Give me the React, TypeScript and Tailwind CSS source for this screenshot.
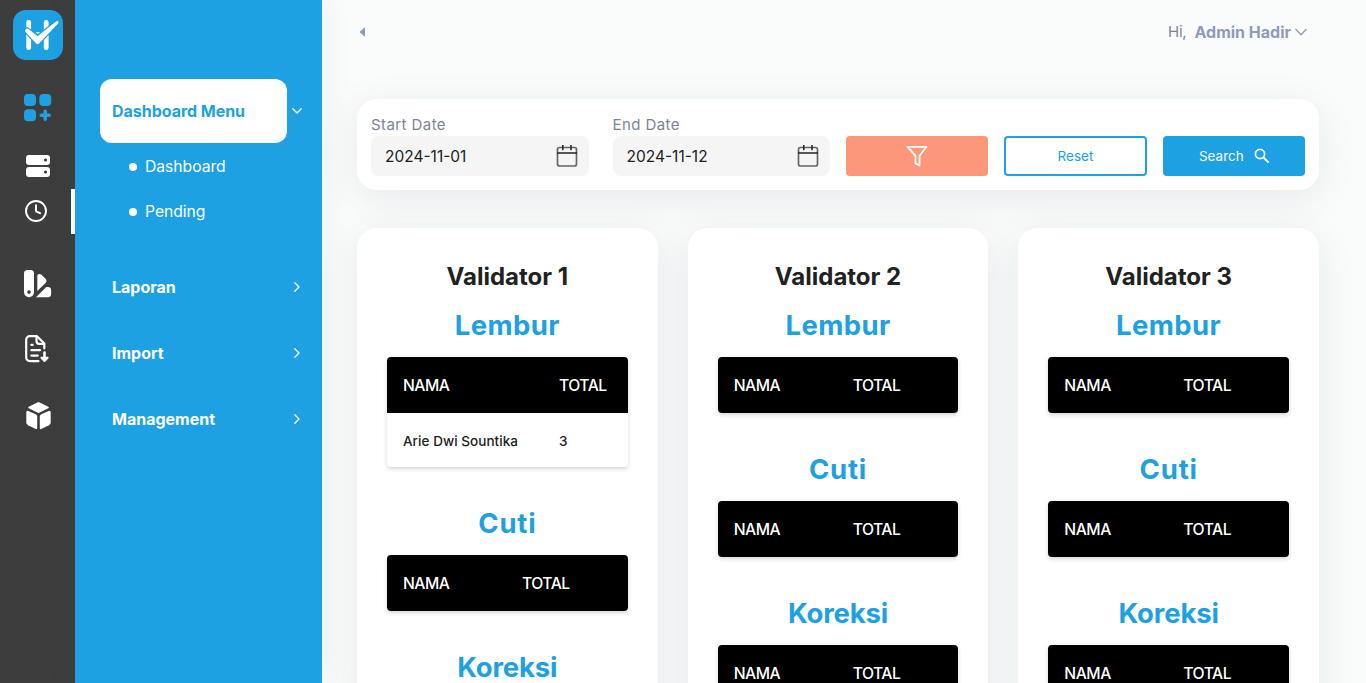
import React from "react";

const CARD_SHADOW = "shadow-[0_8px_36px_2px_rgba(60,70,100,0.09)]";

function Logo() {
  return (
    <svg viewBox="0 0 50 50" className="h-[50px] w-[50px]" aria-hidden="true">
      <rect width="50" height="50" rx="13" fill="#1da1e3" />
      <path d="M15.700 12.300v25.400M33.200 12.300v25.400" fill="none" stroke="#fff" strokeWidth="4.800" strokeLinecap="round" />
      <path d="M22.300 22.300h5l-2.500 1.700z" fill="#fff" />
      <path
        d="M12.200 20.300q.8-2.500 3.100-1.500L24.600 26.300 43.300 11.200q1.800-.8 2.300.8 0 .9-.7 1.700L26 33.500q-1.400 1.400-2.800 0L12.800 22.500q-.9-1-.6-2.200z"
        fill="#fff"
        stroke="#1da1e3"
        strokeWidth="2.400"
        paintOrder="stroke"
      />
    </svg>
  );
}

function IconGrid() {
  return (
    <svg viewBox="0 0 28 28" className="h-7 w-7" fill="#1da1e3" aria-hidden="true">
      <rect x="0" y="0" width="12" height="12" rx="4" />
      <rect x="15.300" y="0" width="12" height="12" rx="4" />
      <rect x="0" y="15.200" width="12" height="12" rx="4" />
      <path d="M21.200 17.200v8M17.200 21.200h8" stroke="#1da1e3" strokeWidth="3.600" strokeLinecap="round" />
    </svg>
  );
}

function IconServer() {
  return (
    <svg viewBox="0 0 24 22" className="h-[22px] w-6" aria-hidden="true">
      <rect x="0" y="0" width="24" height="10" rx="3" fill="#fff" />
      <rect x="0" y="12" width="24" height="10" rx="3" fill="#fff" />
      <circle cx="19.500" cy="5" r="1.600" fill="#3d3d3d" />
      <circle cx="19.500" cy="17" r="1.600" fill="#3d3d3d" />
    </svg>
  );
}

function IconClock() {
  return (
    <svg viewBox="0 0 22 22" className="-mt-0.5 h-[22px] w-[22px]" fill="none" stroke="#fff" strokeLinecap="round" strokeLinejoin="round" aria-hidden="true">
      <circle cx="11" cy="11" r="10" strokeWidth="1.900" />
      <path d="M11 5.200v6.100l4 1.900" strokeWidth="2" />
    </svg>
  );
}

function IconSwatch() {
  return (
    <svg viewBox="0 0 28 28" className="h-7 w-7" aria-hidden="true">
      <path fillRule="evenodd" fill="#fff" d="M3.500 0h3A3.500 3.500 0 0 1 10 3.500V22.300a5 5 0 0 1-10 0V3.500A3.500 3.500 0 0 1 3.500 0zM5 20.300a1.800 1.800 0 1 0 0 3.600 1.800 1.800 0 0 0 0-3.600z" />
      <path fill="#fff" d="M13.300 6q.2-1.700 1.700-1.900 1.500-.2 2.800 1l4 4q1.500 1.900 0 3.700L13.300 21z" />
      <path fill="#fff" d="M12 27.300L22.300 17h1.500a3.300 3.300 0 0 1 3.300 3.300V24a3.300 3.300 0 0 1-3.300 3.300z" />
    </svg>
  );
}

function IconFileDown() {
  return (
    <svg viewBox="0 0 24 28" className="h-7 w-6" fill="none" stroke="#fff" strokeWidth="2.200" strokeLinecap="round" strokeLinejoin="round" aria-hidden="true">
      <path d="M13.500 26.100H4.700A3.500 3.500 0 0 1 1.200 22.600V4.700A3.500 3.500 0 0 1 4.700 1.200H12l7.300 7.300v5" />
      <path d="M11.500 1.500V6q0 2.800 2.800 2.800H19" />
      <path d="M6.300 9.800h1.400M6.300 15.200h8.700M6.300 20.600h6.500" />
      <path d="M19.500 17.500v6" strokeWidth="2.600" />
      <path d="M16.400 22.800h6.200l-3.100 3.200z" fill="#fff" strokeWidth="2" />
    </svg>
  );
}

function IconCube() {
  return (
    <svg viewBox="0 0 25 28" className="h-7 w-[25px]" fill="#fff" aria-hidden="true">
      <path d="M11.300.4q1.200-.6 2.400 0l8.600 4.300q1.100.8 0 1.600l-8.600 4.300q-1.200.6-2.400 0L2.700 6.300q-1.100-.8 0-1.600z" />
      <path d="M2.300 9l7.400 3.300q1.500.8 1.500 2.300v11.500q0 1.500-1.400.9l-7.700-3.800Q.3 22.200.3 20.500v-10q0-2.100 2-1.500z" />
      <path d="M22.700 9l-7.400 3.300q-1.500.8-1.500 2.300v11.500q0 1.500 1.400.9l7.700-3.800q1.800-1 1.800-2.700v-10q0-2.100-2-1.500z" />
    </svg>
  );
}

function Chevron({ open = false }: { open?: boolean }) {
  return open ? (
    <svg viewBox="0 0 10 6" className="h-1.5 w-2.5" fill="none" stroke="#fff" strokeWidth="1.300" strokeLinecap="round" strokeLinejoin="round" aria-hidden="true">
      <path d="M.8.8L5 5 9.200.8" />
    </svg>
  ) : (
    <svg viewBox="0 0 6 10" className="h-2.5 w-1.5" fill="none" stroke="#fff" strokeWidth="1.300" strokeLinecap="round" strokeLinejoin="round" aria-hidden="true">
      <path d="M.8.8L5 5 .8 9.200" />
    </svg>
  );
}

function IconCalendar() {
  return (
    <svg viewBox="0 0 22 24" className="h-6 w-[22px]" fill="none" stroke="#222" aria-hidden="true">
      <rect x="1.500" y="3.500" width="19" height="18.500" rx="2" strokeOpacity=".68" strokeWidth="1.700" />
      <path d="M1 9h20M6.800 1v5.300M15 1v5.300" strokeWidth="1.500" />
    </svg>
  );
}

function IconRail() {
  return (
    <nav className="flex w-[75px] shrink-0 flex-col bg-[#3d3d3d]">
      <div className="pt-2.5 pl-[13px]"><Logo /></div>
      <div className="pt-[34px] pl-6"><IconGrid /></div>
      <div className="pt-[33px] pl-[26px]"><IconServer /></div>
      <div className="mt-3 flex h-[45px] items-center justify-between pl-[25px]">
        <IconClock />
        <span className="h-full w-1 bg-white" />
      </div>
      <div className="pt-9 pl-6"><IconSwatch /></div>
      <div className="pt-[37px] pl-[25px]"><IconFileDown /></div>
      <div className="pt-[39px] pl-[25.500px]"><IconCube /></div>
    </nav>
  );
}

function Menu() {
  return (
    <aside className="w-[247px] shrink-0 bg-[#1da1e3] pt-[79px] pl-[25px] text-white shadow-[0_0_30px_rgba(60,70,80,0.08)]">
      <div className="flex items-center gap-[5px]">
        <div className="flex h-16 w-[187px] items-center rounded-xl bg-white pl-3 text-[16px] font-bold tracking-[-0.03px] text-[#1da1e3]">
          Dashboard Menu
        </div>
        <Chevron open />
      </div>
      <ul className="mb-[20px] pt-px text-[15.700px] tracking-[-0.03px]">
        {["Dashboard", "Pending"].map((t) => (
          <li key={t} className="flex h-[45px] items-center gap-2 pl-[29px]">
            <span className="h-2 w-2 rounded-full bg-white" />
            {t}
          </li>
        ))}
      </ul>
      {["Laporan", "Import", "Management"].map((t) => (
        <div key={t} className="flex h-[66px] items-center justify-between pr-[22px] pl-3 text-[16px] font-bold">
          {t}
          <Chevron />
        </div>
      ))}
    </aside>
  );
}

function DateField({ label, value }: { label: string; value: string }) {
  return (
    <label className="block w-[217.500px]">
      <span className="block h-[25px] pt-0.5 text-[15px] leading-6 tracking-[0.420px] text-[#7c8494]">{label}</span>
      <span className="flex h-10 items-center justify-between rounded-lg bg-[#f5f5f5] pr-[11px] pl-3.5 text-[15.500px] text-[#212121]">
        <span className="pt-px">{value}</span>
        <IconCalendar />
      </span>
    </label>
  );
}

function Filters() {
  return (
    <section className={`flex h-[91px] items-end rounded-[20px] bg-white p-3.5 ${CARD_SHADOW}`}>
      <DateField label="Start Date" value="2024-11-01" />
      <div className="ml-6"><DateField label="End Date" value="2024-11-12" /></div>
      <div className="ml-4 grid h-10 flex-1 grid-cols-3 gap-4 text-[13.500px]">
        <button className="flex items-center justify-center rounded bg-[#fc977a]">
          <svg viewBox="0 0 22 22" className="h-[22px] w-[22px]" fill="none" stroke="#fff" strokeWidth="1.800" aria-hidden="true">
            <path d="M1.500 1.800h19l-7 9v9.700l-4-2v-7.700z" strokeLinejoin="round" />
          </svg>
        </button>
        <button className="rounded border-2 border-[#1da1e3] text-[#1da1e3]">Reset</button>
        <button className="flex items-center justify-center gap-2.5 rounded bg-[#1da1e3] text-white">
          <span className="ml-px">Search</span>
          <svg viewBox="0 0 16 16" className="h-4 w-4" fill="none" stroke="#fff" strokeWidth="1.700" aria-hidden="true">
            <circle cx="6" cy="6" r="4.600" />
            <path d="M9.500 9.500l5 5" strokeWidth="2" />
          </svg>
        </button>
      </div>
    </section>
  );
}

type Row = { name: string; total: number };

const TITLE_TRACKING: Record<string, string> = {
  Lembur: "tracking-[0.4px]",
  Cuti: "tracking-[0.8px]",
  Koreksi: "tracking-[-0.15px]",
};

function TableBlock({ title, rows = [] }: { title: string; rows?: Row[] }) {
  const cols = rows.length ? "grid-cols-[156px_1fr]" : "grid-cols-[119px_1fr]";
  return (
    <div className="mb-[38px]">
      <h3 className={`mb-[14px] text-center text-[27.500px] leading-9 font-bold text-[#1da1e3] ${TITLE_TRACKING[title]}`}>{title}</h3>
      <div className="overflow-hidden rounded bg-white shadow-[0_2px_4px_rgba(0,0,0,0.16)]">
        <div className={`grid h-14 items-center bg-black px-4 pt-px text-[15.700px] font-medium tracking-[-0.5px] text-white ${cols}`}>
          <span>NAMA</span>
          <span>TOTAL</span>
        </div>
        {rows.map((r) => (
          <div key={r.name} className={`grid h-[54px] items-center px-4 pt-0.5 text-[13.500px] font-medium tracking-[0.050px] text-[#212121] ${cols}`}>
            <span>{r.name}</span>
            <span>{r.total}</span>
          </div>
        ))}
      </div>
    </div>
  );
}

function Validator({ n, rows }: { n: number; rows?: Row[] }) {
  return (
    <section className={`h-[700px] rounded-[20px] bg-white px-[30px] pt-[31px] ${CARD_SHADOW}`}>
      <h2 className="mb-[12px] text-center text-[24px] leading-9 font-bold text-[#212121]">Validator {n}</h2>
      <TableBlock title="Lembur" rows={rows} />
      <TableBlock title="Cuti" />
      <TableBlock title="Koreksi" />
    </section>
  );
}

export default function App() {
  return (
    <div className="flex h-[683px] w-[1366px] overflow-hidden bg-[#fafcfb] font-['Inter',sans-serif]">
      <IconRail />
      <Menu />
      <main className="min-w-0 flex-1 pr-[47px] pl-[35px]">
        <header className="flex h-[99px] items-start justify-between pt-[19px] text-[#8f9bba]">
          <svg viewBox="0 0 6 10" className="mt-2 ml-[1.500px] h-2.5 w-1.5" fill="#8f9bba" aria-hidden="true">
            <path d="M6 0v10L.5 5z" />
          </svg>
          <div className="flex h-[26px] items-center pr-3 text-[16px]">
            <span className="mr-2 text-[15px] tracking-[-0.2px] text-[#7c8494]">Hi,</span>
            <span className="mr-1 font-bold">Admin Hadir</span>
            <svg viewBox="0 0 12 8" className="h-2 w-3" fill="none" stroke="#8f9bba" strokeWidth="1.300" aria-hidden="true">
              <path d="M.5 1L6 6.800 11.500 1" />
            </svg>
          </div>
        </header>
        <Filters />
        <div className="mt-[38px] grid grid-cols-3 gap-[30px]">
          <Validator n={1} rows={[{ name: "Arie Dwi Sountika", total: 3 }]} />
          <Validator n={2} />
          <Validator n={3} />
        </div>
      </main>
    </div>
  );
}
